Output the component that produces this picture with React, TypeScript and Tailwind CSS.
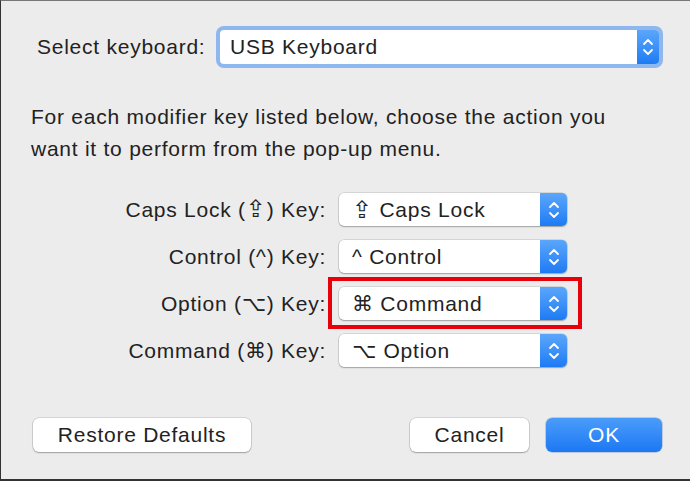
import React from "react";

const Stepper = ({ w }: { w: string }) => (
  <div className={`${w} h-full flex items-center justify-center bg-gradient-to-b from-[#5aa6fb] to-[#1b7bf4]`}>
    <svg width="12" height="22" viewBox="0 0 12 22" fill="none" stroke="white" strokeWidth="1.8" strokeLinecap="round" strokeLinejoin="round">
      <path d="M2 8 L6 4 L10 8" />
      <path d="M2 14 L6 18 L10 14" />
    </svg>
  </div>
);

const Caps = () => <span className="text-[24px] leading-none">⇪</span>;

const Popup = ({ children }: { children: React.ReactNode }) => (
  <div className="flex w-[228px] h-[33px] rounded-[5px] overflow-hidden bg-white shadow-[0_0_0_0.5px_rgba(0,0,0,0.18),0_1px_1.5px_rgba(0,0,0,0.25)]">
    <div className="flex-1 flex items-center pl-[13px] text-[21px] text-[#222] whitespace-pre">{children}</div>
    <Stepper w="w-[27px]" />
  </div>
);

const Row = ({ label, value, boxed }: { label: React.ReactNode; value: React.ReactNode; boxed?: boolean }) => (
  <div className="flex items-center h-[33px]">
    <div className="w-[326px] text-right text-[21px] text-[#222] pr-[1px] whitespace-pre">{label}</div>
    <div className="ml-[12px] relative">
      <Popup>{value}</Popup>
      {boxed && (
        <div className="absolute left-[-11px] top-[-10px] w-[254px] h-[52px] border-[4px] border-[#e8000b]" />
      )}
    </div>
  </div>
);

const Btn = ({ children, w, primary }: { children: React.ReactNode; w: string; primary?: boolean }) => (
  <div
    className={`${w} h-[34px] rounded-[6px] flex items-center justify-center text-[21px] ${
      primary
        ? "bg-gradient-to-b from-[#4a9cfa] to-[#1a78f3] text-white shadow-[0_0_0_0.5px_rgba(0,60,160,0.4)]"
        : "bg-white text-[#222] shadow-[0_0_0_0.5px_rgba(0,0,0,0.2),0_1px_1.5px_rgba(0,0,0,0.25)]"
    }`}
  >
    {children}
  </div>
);

export default function App() {
  return (
    <div
      className="w-[690px] h-[481px] bg-[#ececec] border-l border-b-2 border-t border-l-[#333] border-b-[#333] border-t-[#777] overflow-hidden flex flex-col tracking-[0.75px]"
      style={{ fontFamily: '"Liberation Sans", "DejaVu Sans", sans-serif' }}
    >
      <div className="flex items-center mt-[25px] h-[42px]">
        <div className="ml-[36px] w-[179px] text-[21px] text-[#222] whitespace-nowrap">Select keyboard:</div>
        <div className="w-[447px] h-[42px] rounded-[8px] bg-[#8db7ee] p-[4px]">
          <div className="flex h-full rounded-[4px] overflow-hidden bg-white">
            <div className="flex-1 flex items-center pl-[10px] text-[21px] text-[#222]">USB Keyboard</div>
            <Stepper w="w-[22px]" />
          </div>
        </div>
      </div>

      <div className="mt-[33px] ml-[30px] text-[21px] leading-[32px] text-[#222] whitespace-nowrap">
        <div>For each modifier key listed below, choose the action you</div>
        <div>want it to perform from the pop-up menu.</div>
      </div>

      <div className="mt-[28px] flex flex-col gap-[14px]">
        <Row label={<>Caps Lock (<Caps />) Key:</>} value={<><Caps /> Caps Lock</>} />
        <Row label="Control (^) Key:" value="^ Control" />
        <Row label="Option (⌥) Key:" value="⌘ Command" boxed />
        <Row label="Command (⌘) Key:" value="⌥ Option" />
      </div>

      <div className="mt-[51px] flex items-center">
        <div className="ml-[32px]">
          <Btn w="w-[218px]">Restore Defaults</Btn>
        </div>
        <div className="ml-auto flex gap-[17px] mr-[28px]">
          <Btn w="w-[119px]">Cancel</Btn>
          <Btn w="w-[116px]" primary>OK</Btn>
        </div>
      </div>
    </div>
  );
}
